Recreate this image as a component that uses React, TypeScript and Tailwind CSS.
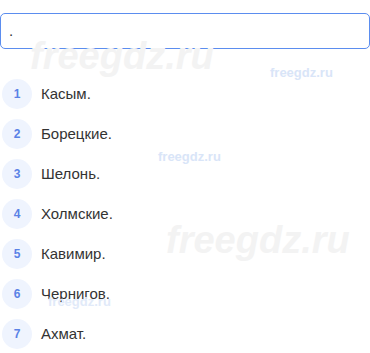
const items = ['Касым.', 'Борецкие.', 'Шелонь.', 'Холмские.', 'Кавимир.', 'Чернигов.', 'Ахмат.'];

const App = () => {
  return (
    <div className="relative w-[370px] h-[353px] bg-white overflow-hidden font-['Liberation_Sans',Arial,sans-serif]">
      <div className="pt-[13px]">
        <div className="h-[36px] w-[370px] border border-[#5b8def] rounded-[5px] flex items-center pl-[8px] text-[15px] text-[#333]">
          .
        </div>
      </div>
      <ul className="mt-[30px] flex flex-col gap-[10px] pl-[2px]">
        {items.map((item, i) => (
          <li key={i} className="flex items-center h-[30px]">
            <span className="w-[30px] h-[30px] rounded-full bg-[#eff4fe] text-[#5a82e6] text-[12px] font-bold flex items-center justify-center">
              {i + 1}
            </span>
            <span className="ml-[9px] text-[15px] text-[#333]">{item}</span>
          </li>
        ))}
      </ul>

      {/* watermarks */}
      <span className="absolute left-[30px] top-[28px] text-[38px] font-bold italic text-[#f3f3f3] pointer-events-none select-none">freegdz.ru</span>
      <span className="absolute left-[166px] top-[212px] text-[38px] font-bold italic text-[#f3f3f3] pointer-events-none select-none">freegdz.ru</span>
      <span className="absolute left-[270px] top-[63px] text-[13px] font-bold text-[#d9e5f8] pointer-events-none select-none">freegdz.ru</span>
      <span className="absolute left-[158px] top-[147px] text-[13px] font-bold text-[#d9e5f8] pointer-events-none select-none">freegdz.ru</span>
      <span className="absolute left-[48px] top-[292px] text-[13px] font-bold text-[#e1eaf9] pointer-events-none select-none">freegdz.ru</span>
    </div>
  );
};

export default App;
